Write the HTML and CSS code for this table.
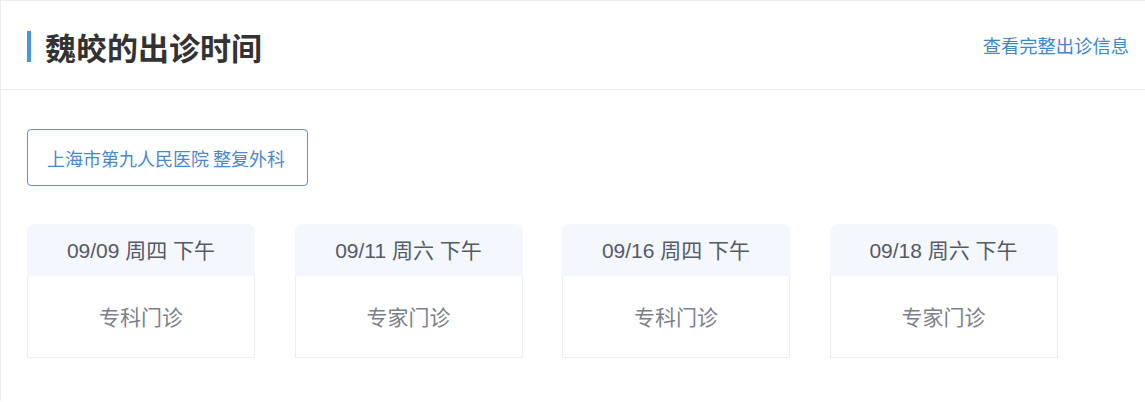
FILE: index.html
```html
<!DOCTYPE html>
<html lang="zh-CN">
<head>
<meta charset="utf-8">
<link rel="stylesheet" href="styles.css">
</head>
<body>
<div class="panel">
  <div class="panel-head">
    <h2 class="title">魏皎的出诊时间</h2>
    <a class="more" href="#">查看完整出诊信息</a>
  </div>
  <div class="panel-body">
    <div class="hospital">上海市第九人民医院 整复外科</div>
    <div class="cards">
      <div class="card">
        <div class="card-head">09/09 周四 下午</div>
        <div class="card-body">专科门诊</div>
      </div>
      <div class="card">
        <div class="card-head">09/11 周六 下午</div>
        <div class="card-body">专家门诊</div>
      </div>
      <div class="card">
        <div class="card-head">09/16 周四 下午</div>
        <div class="card-body">专科门诊</div>
      </div>
      <div class="card">
        <div class="card-head">09/18 周六 下午</div>
        <div class="card-body">专家门诊</div>
      </div>
    </div>
  </div>
</div>
</body>
</html>
```
FILE: styles.css
```css
html, body {
  margin: 0;
  padding: 0;
  background: #fff;
}
body {
  font-family: "Liberation Sans", "Noto Sans CJK SC", sans-serif;
  width: 1145px;
  height: 402px;
  overflow: hidden;
}
.panel {
  border-top: 1px solid #ededed;
  border-left: 1px solid #ededed;
  height: 401px;
  box-sizing: border-box;
}
.panel-head {
  height: 88px;
  border-bottom: 1px solid #ececec;
  display: flex;
  align-items: center;
  justify-content: space-between;
  padding: 0 16px 0 26px;
}
.title {
  margin: 3px 0 0 0;
  border-left: 4px solid #4a95e0;
  padding-left: 14px;
  height: 31px;
  line-height: 31px;
  font-size: 31px;
  font-weight: bold;
  color: #333;
  font-family: "Noto Sans CJK SC", sans-serif;
}
.more {
  font-size: 18.3px;
  color: #3f86d0;
  text-decoration: none;
  font-family: "Noto Sans CJK SC", sans-serif;
}
.panel-body {
  padding: 39px 0 0 26px;
}
.hospital {
  display: inline-flex;
  align-items: center;
  box-sizing: border-box;
  height: 57px;
  width: 281px;
  padding-left: 19px;
  border: 1px solid #5a92d2;
  border-radius: 4px;
  font-size: 18px;
  color: #4a88d0;
  font-family: "Noto Sans CJK SC", sans-serif;
}
.cards {
  display: flex;
  gap: 39.5px;
  margin-top: 38px;
}
.card {
  width: 228px;
  display: flex;
  flex-direction: column;
}
.card-head {
  height: 52px;
  box-sizing: border-box;
  padding-bottom: 3px;
  background: #f4f7fd;
  border-radius: 8px 8px 0 0;
  display: flex;
  align-items: center;
  justify-content: center;
  font-size: 21px;
  color: #545a66;
}
.card-body {
  height: 82px;
  box-sizing: border-box;
  padding-bottom: 2px;
  border: 1px solid #eeeeee;
  border-top: 0;
  display: flex;
  align-items: center;
  justify-content: center;
  font-size: 21px;
  color: #7b808a;
  font-family: "Noto Sans CJK SC", sans-serif;
}
```
